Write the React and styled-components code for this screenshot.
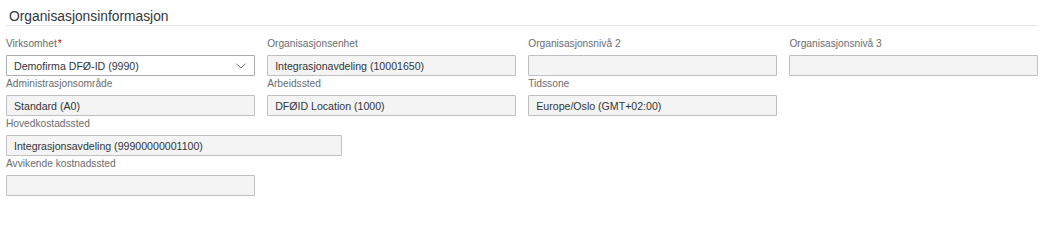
import React from 'react';
import styled, { createGlobalStyle } from 'styled-components';

const GlobalStyle = createGlobalStyle`
  body {
    margin: 0;
    background: #ffffff;
    font-family: "Liberation Sans", Arial, sans-serif;
    color: #32363a;
  }
`;

const Section = styled.section`
  width: 1047px;
  padding: 0 9px 0 6px;
  box-sizing: border-box;
`;

const Title = styled.h2`
  margin: 0;
  padding: 9px 0 0 3px;
  height: 26px;
  box-sizing: border-box;
  font-size: 13.8px;
  line-height: 16px;
  font-weight: normal;
  color: #32363a;
  border-bottom: 1px solid #e5e5e5;
`;

const Grid = styled.div`
  display: grid;
  grid-template-columns: repeat(4, 1fr);
  column-gap: 12.5px;
  margin-top: 10px;
`;

const Field = styled.div`
  display: flex;
  flex-direction: column;
  grid-column: ${(p) => (p.$wide ? '1 / -1' : 'auto')};
  width: ${(p) => (p.$width ? `${p.$width}px` : 'auto')};
`;

const Label = styled.label`
  height: 19px;
  font-size: 10.2px;
  line-height: 16px;
  color: #6a6d70;
  white-space: nowrap;
`;

const Required = styled.span`
  color: #bb0000;
  margin-left: 1px;
`;

const Input = styled.div`
  height: 21px;
  box-sizing: border-box;
  border: 1px solid ${(p) => (p.$select ? '#a9adb1' : '#bfbfbf')};
  background: ${(p) => (p.$select ? '#ffffff' : '#f4f4f4')};
  border-radius: 1px;
  padding: 0 8px 0 7px;
  display: flex;
  align-items: center;
  justify-content: space-between;
  font-size: 10.6px;
  color: #32363a;
  white-space: nowrap;
`;

const Chevron = () => (
  <svg width="10" height="6" viewBox="0 0 10 6" fill="none">
    <path d="M0.5 0.8 L5 5 L9.5 0.8" stroke="#6a6d70" strokeWidth="1" />
  </svg>
);

const FormField = ({ label, value, required, select, wide, width }) => (
  <Field $wide={wide} $width={width}>
    <Label>
      {label}
      {required && <Required>*</Required>}
    </Label>
    <Input $select={select}>
      <span>{value}</span>
      {select && <Chevron />}
    </Input>
  </Field>
);

const App = () => (
  <>
    <GlobalStyle />
    <Section>
      <Title>Organisasjonsinformasjon</Title>
      <Grid>
        <FormField label="Virksomhet" required select value="Demofirma DFØ-ID (9990)" />
        <FormField label="Organisasjonsenhet" value="Integrasjonavdeling (10001650)" />
        <FormField label="Organisasjonsnivå 2" value="" />
        <FormField label="Organisasjonsnivå 3" value="" />
        <FormField label="Administrasjonsområde" value="Standard (A0)" />
        <FormField label="Arbeidssted" value="DFØID Location (1000)" />
        <FormField label="Tidssone" value="Europe/Oslo (GMT+02:00)" />
        <div />
        <FormField wide width={336} label="Hovedkostadssted" value="Integrasjonsavdeling (99900000001100)" />
        <FormField wide width={249} label="Avvikende kostnadssted" value="" />
      </Grid>
    </Section>
  </>
);

export default App;
